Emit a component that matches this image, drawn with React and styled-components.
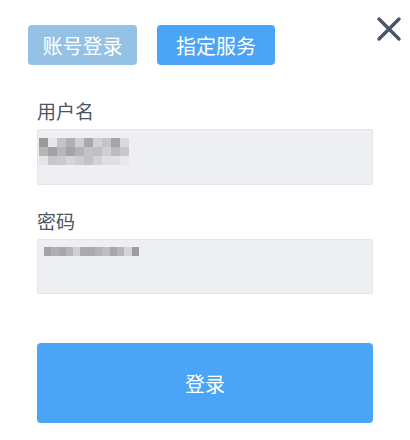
import React from 'react'
import styled, { createGlobalStyle } from 'styled-components'

const GlobalStyle = createGlobalStyle`
  body {
    margin: 0;
    background: #fff;
    font-family: "Noto Sans CJK SC", "Noto Sans", sans-serif;
  }
`

const Page = styled.div`
  width: 410px;
  height: 440px;
  box-sizing: border-box;
  padding-top: 25px;
`

const Header = styled.div`
  display: flex;
  align-items: flex-start;
  padding: 0 8px 0 28px;
`

const Tabs = styled.div`
  display: flex;
  gap: 20px;
  flex: 1;
`

const Tab = styled.button`
  width: ${p => p.$w}px;
  height: 40px;
  border: none;
  border-radius: 4px;
  background: ${p => (p.$active ? '#4ba4f6' : '#94c1e4')};
  color: #fff;
  font-family: inherit;
  font-size: 20px;
  padding: 0;
  display: flex;
  align-items: center;
  justify-content: center;
`

const Close = styled.button`
  border: none;
  background: none;
  padding: 0;
  margin-top: -9px;
  width: 26px;
  height: 26px;
  display: flex;
`

const Form = styled.div`
  padding: 0 37px;
  display: flex;
  flex-direction: column;
`

const Label = styled.div`
  font-size: 19px;
  line-height: 24px;
  color: #4a5566;
  margin-top: ${p => p.$top}px;
  margin-bottom: 6px;
`

const Field = styled.div`
  height: ${p => p.$h}px;
  box-sizing: border-box;
  background: #eeeff3;
  border: 1px solid #e4e5ea;
  border-radius: 2px;
  position: relative;
`

const Mosaic = styled.div`
  position: absolute;
  left: ${p => p.$x}px;
  top: ${p => p.$y}px;
  display: grid;
  grid-template-columns: repeat(${p => p.$cols}, ${p => p.$cw}px);
  grid-auto-rows: ${p => p.$rh}px;
  filter: blur(0.6px);
`

const Pixel = styled.div`
  background: ${p => p.$c};
`

const Submit = styled.button`
  margin-top: 49px;
  height: 80px;
  border: none;
  border-radius: 4px;
  background: #4ba5f7;
  color: #fff;
  font-family: inherit;
  font-size: 20px;
`

const userPixels = [
  '#9a9a9a', '#e6e6e8', '#c4c4c6', '#b0b0b2', '#cfcfd1', '#a9a9ab', '#d2d2d4', '#c6c6c8', '#a5a5a7', '#dadadc',
  '#b5b5b7', '#a2a2a4', '#b8b8ba', '#a4a4a6', '#b4b4b6', '#c3c3c5', '#c0c0c2', '#d0d0d2', '#bcbcbe', '#c8c8ca',
  '#e4e4e6', '#c7c7c9', '#cacacc', '#d6d6d8', '#cdcdcf', '#c3c3c5', '#d3d3d5', '#dfdfe1', '#e0e0e2', '#e8e8ea',
]

const passPixels = [
  '#a4a4a6', '#b0b0b2', '#a8a8aa', '#b6b6b8', '#d0d0d2', '#acacae', '#a9a9ab', '#b3b3b5', '#bfbfc1', '#a7a7a9', '#b6b6b8', '#d4d4d6', '#9e9e9f',
]

const App = () => (
  <Page>
    <GlobalStyle />
    <Header>
      <Tabs>
        <Tab $w={109}>账号登录</Tab>
        <Tab $w={118} $active>指定服务</Tab>
      </Tabs>
      <Close aria-label="close">
        <svg width="26" height="26" viewBox="0 0 26 26">
          <path d="M3 3 L23 23 M23 3 L3 23" stroke="#4a5668" strokeWidth="3.4" strokeLinecap="round" />
        </svg>
      </Close>
    </Header>
    <Form>
      <Label $top={34}>用户名</Label>
      <Field $h={56}>
        <Mosaic $x={1} $y={8} $cols={10} $cw={9} $rh={9}>
          {userPixels.map((c, i) => <Pixel key={i} $c={c} />)}
        </Mosaic>
      </Field>
      <Label $top={24}>密码</Label>
      <Field $h={55}>
        <Mosaic $x={6} $y={7} $cols={13} $cw={7.3} $rh={9}>
          {passPixels.map((c, i) => <Pixel key={i} $c={c} />)}
        </Mosaic>
      </Field>
      <Submit>登录</Submit>
    </Form>
  </Page>
)

export default App
